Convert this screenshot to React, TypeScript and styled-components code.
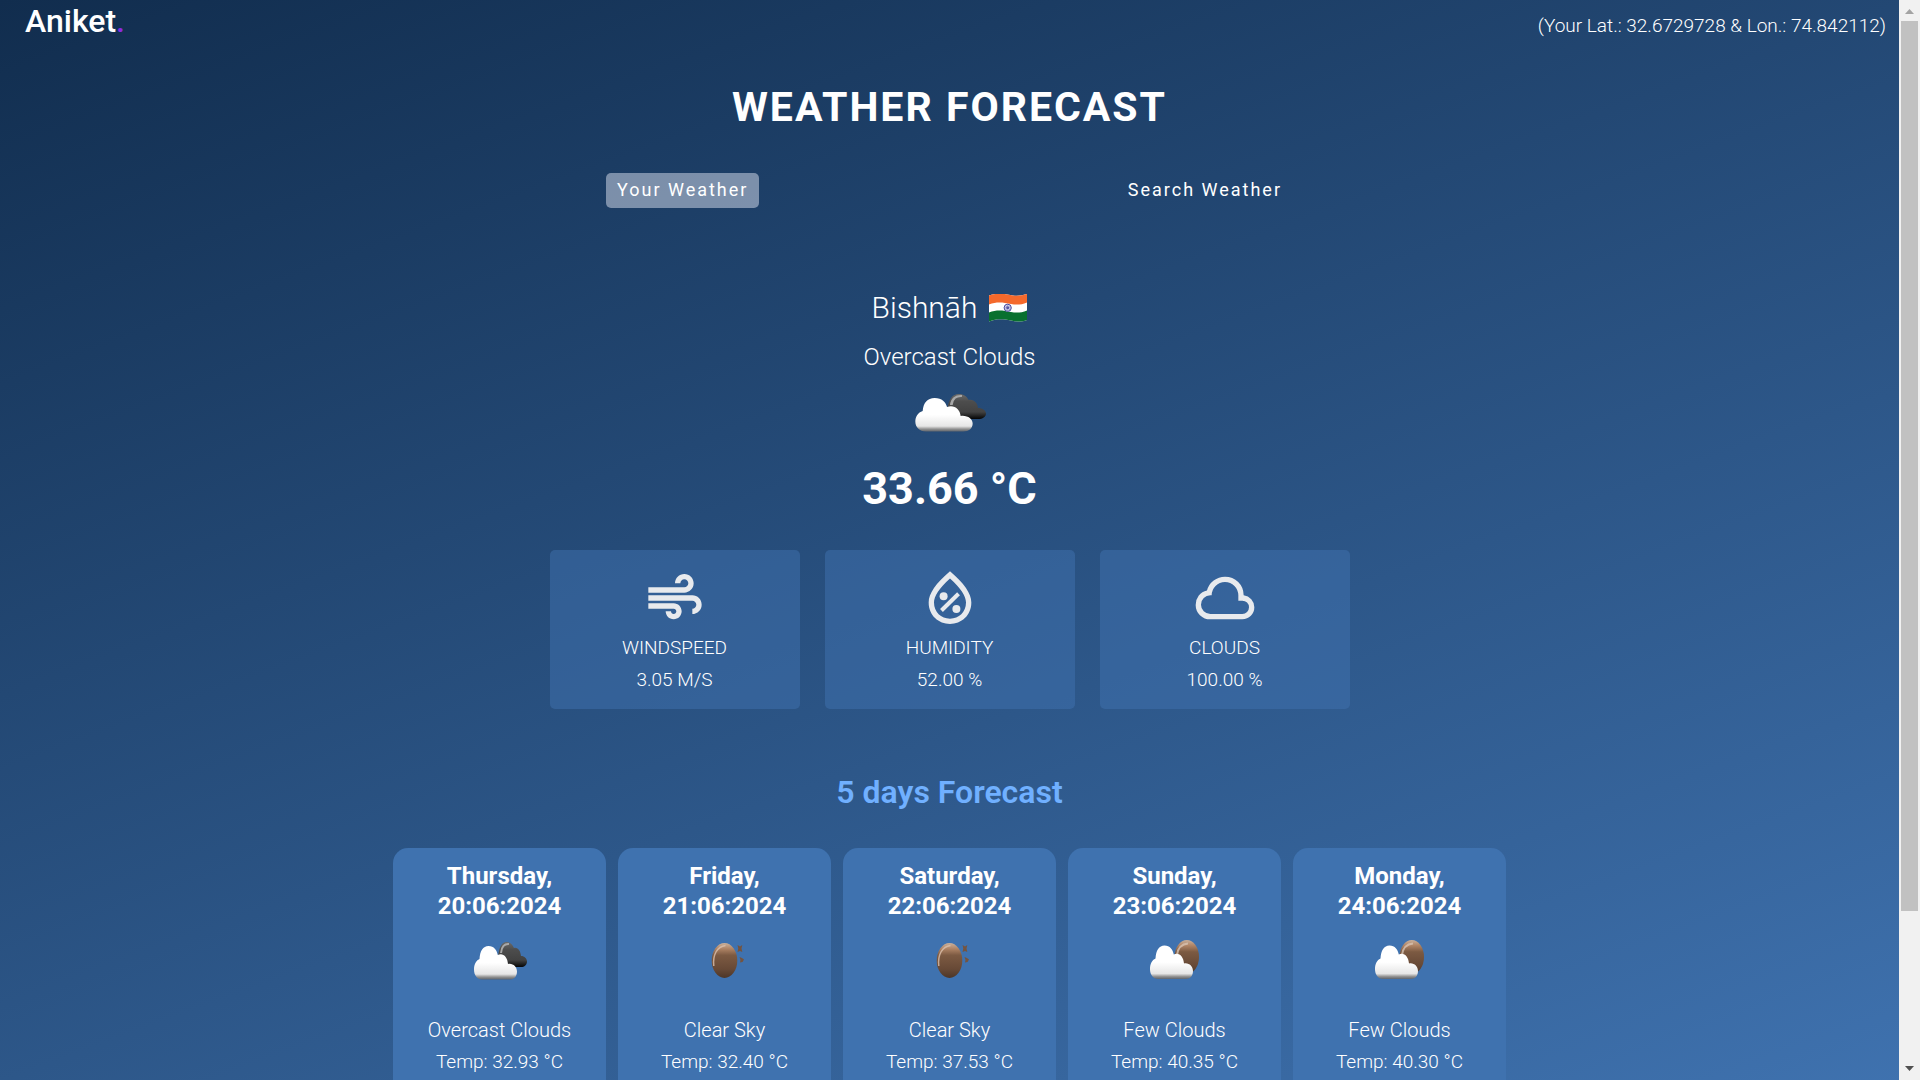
import React from 'react';
import styled, { createGlobalStyle } from 'styled-components';
import { MdAir } from 'react-icons/md';

const GlobalStyle = createGlobalStyle`
  *, *::before, *::after { box-sizing: border-box; }
  body {
    margin: 0;
    color: #ffffff;
    font-family: Roboto, "Liberation Sans", sans-serif;
    font-weight: 300;
  }
  h1, h2, h3, p { margin: 0; }
`;

const Shell = styled.div`
  display: flex;
  height: 100vh;
  background: linear-gradient(160deg, #112d4e, #3f72af);
`;

const Page = styled.div`
  flex: 1;
  min-width: 0;
  overflow-y: auto;
  scrollbar-width: none;
`;

const Header = styled.header`
  display: flex;
  justify-content: space-between;
  align-items: flex-start;
  height: 42px;
  padding: 0 13px 0 25px;
`;

const Brand = styled.a`
  color: inherit;
  text-decoration: none;
  font-size: 32px;
  font-weight: 500;
  line-height: 42px;
`;

const BrandDot = styled.span`
  color: #8a2be2;
`;

const Coordinates = styled.p`
  padding-top: 12px;
  font-size: 19px;
  line-height: 28px;
`;

const Main = styled.main`
  display: flex;
  flex-direction: column;
  align-items: center;
`;

const Title = styled.h1`
  margin-top: 41px;
  font-size: 41px;
  font-weight: 700;
  line-height: 48px;
  letter-spacing: 2px;
  text-transform: uppercase;
`;

const Tabs = styled.nav`
  display: flex;
  justify-content: space-around;
  width: 55%;
  margin-top: 42px;
`;

const Tab = styled.button<{ $active?: boolean }>`
  height: 35px;
  padding: 0 11px 2px;
  border: 0;
  border-radius: 5px;
  background: ${(p) => (p.$active ? 'rgba(219, 226, 239, 0.5)' : 'transparent')};
  color: inherit;
  font-family: inherit;
  font-size: 18px;
  font-weight: 400;
  letter-spacing: 2px;
  cursor: pointer;
`;

const Current = styled.section`
  display: flex;
  flex-direction: column;
  align-items: center;
  margin-top: 80px;
`;

const Place = styled.div`
  display: flex;
  align-items: center;
  gap: 12px;
  font-size: 30px;
  line-height: 40px;
`;

const Condition = styled.p`
  margin: 13px 0 19px;
  font-size: 24px;
  line-height: 32px;
`;

const Temperature = styled.p`
  margin-top: 29px;
  font-size: 45px;
  font-weight: 700;
  line-height: 56px;
`;

const Metrics = styled.div`
  display: flex;
  gap: 25px;
  margin-top: 33px;
`;

const Metric = styled.div`
  display: flex;
  flex-direction: column;
  align-items: center;
  width: 250px;
  padding: 16px 0 13px;
  border-radius: 5px;
  background: rgba(63, 114, 175, 0.5);
  font-size: 19px;
  line-height: 32px;
  text-transform: uppercase;

  svg {
    width: 64px;
    height: 64px;
    margin-bottom: 2px;
    color: #e8eaed;
  }
`;

const SectionTitle = styled.h2`
  margin-top: 63px;
  color: #70b0ff;
  font-size: 32px;
  font-weight: 600;
  line-height: 40px;
`;

const Forecast = styled.div`
  display: flex;
  gap: 12px;
  margin-top: 36px;
  padding-bottom: 32px;
`;

const DayCard = styled.article`
  display: flex;
  flex-direction: column;
  align-items: center;
  width: 213px;
  padding: 13px 16px 160px;
  border-radius: 15px;
  background: #3f72af;
  text-align: center;
`;

const DayName = styled.h3`
  margin-bottom: 19px;
  font-size: 24px;
  font-weight: 700;
  line-height: 30px;
`;

const DayText = styled.p`
  font-size: 19px;
  line-height: 31px;
`;

const DayCondition = styled(DayText)`
  margin-top: 35px;
  font-size: 20px;
`;

const Drawing = styled.svg<{ $wide?: boolean }>`
  display: block;
  width: ${(p) => (p.$wide ? 72 : 54)}px;
  height: 40px;
`;

const ScrollRail = styled.div`
  display: flex;
  flex-direction: column;
  width: 21px;
  padding: 0 2px;
  background: #f1f1f1;
`;

const ScrollThumb = styled.div`
  flex: 6;
  background: #c1c1c1;
`;

const ScrollRest = styled.div`
  flex: 1;
`;

const ScrollArrow = styled.svg`
  display: block;
  width: 17px;
  height: 21px;
`;

type Sky = 'overcast' | 'clear' | 'few';

const FrontCloud = ({ id }: { id: string }) => (
  <path
    d="M8 39.5C3 39.5 0 35 0 29.5C0 24.5 2 20.5 5.5 19C6 11 9 6 14.5 6C20 6 22.8 10 23.8 15C29 12.5 33.5 17 34 24C39 23 43 27 43 31.5C43 36.500 40 39.500 36 39.500Z"
    fill={`url(#${id}-front)`}
  />
);

const SkyIcon = ({ sky, wide, id }: { sky: Sky; wide?: boolean; id: string }) => (
  <Drawing $wide={wide} viewBox="0 0 54 40" preserveAspectRatio="none" aria-hidden="true">
    <defs>
      <linearGradient id={`${id}-front`} x1="0" y1="0" x2="0" y2="1">
        <stop offset="0" stopColor="#ffffff" />
        <stop offset="0.5" stopColor="#ffffff" />
        <stop offset="0.84" stopColor="#e6e6e6" />
        <stop offset="0.93" stopColor="#8f8f8f" />
        <stop offset="1" stopColor="#5f646c" />
      </linearGradient>
      <linearGradient id={`${id}-dark`} x1="0" y1="0" x2="0" y2="1">
        <stop offset="0" stopColor="#6a6a6a" />
        <stop offset="0.3" stopColor="#4d4d4d" />
        <stop offset="0.72" stopColor="#424242" />
        <stop offset="1" stopColor="#050505" />
      </linearGradient>
      <linearGradient id={`${id}-disc`} x1="0" y1="0" x2="0" y2="1">
        <stop offset="0" stopColor="#c9b09c" />
        <stop offset="0.16" stopColor="#b08566" />
        <stop offset="0.35" stopColor="#7c5a42" />
        <stop offset="0.75" stopColor="#674936" />
        <stop offset="1" stopColor="#4c3628" />
      </linearGradient>
    </defs>
    {sky === 'overcast' && (
      <>
        <path
          d="M25 17C26 7 29 2 33.5 2C37.5 2 39.5 4.5 41 8C45 7 47.5 11 48 16C51.5 16 54 18.5 54 21.5C54 25 51.5 27 48 27L33 27Z"
          fill={`url(#${id}-dark)`}
        />
        <path d="M28 13C28.5 6.500 31.500 3.500 36 4" fill="none" stroke="#a8a8a8" strokeWidth="2" />
        <g transform="translate(1 0)">
          <FrontCloud id={id} />
        </g>
      </>
    )}
    {sky === 'clear' && (
      <>
        <ellipse cx="26.500" cy="20.500" rx="12.800" ry="17.500" fill={`url(#${id}-disc)`} />
        <path d="M15.800 26C14.500 15 19 6.500 27.500 5.500" fill="none" stroke="#dcc0ac" strokeWidth="1.500" opacity="0.8" />
        <path d="M39.500 5L42 6.500L44.300 5L43.500 8.500L44.300 12L42 11L39.500 12L40.300 8.500Z" fill="#75543f" />
        <path d="M41.500 17L44 18L46 19.500L44.500 22L42 22.500L42.500 20Z" fill="#75543f" />
      </>
    )}
    {sky === 'few' && (
      <>
        <ellipse cx="38.800" cy="17" rx="12.200" ry="17" fill={`url(#${id}-disc)`} />
        <path d="M29 15C30 7 34 4 40 3.500" fill="none" stroke="#d8c3b3" strokeWidth="2" opacity="0.8" />
        <g transform="translate(2 -0.500)">
          <FrontCloud id={id} />
        </g>
      </>
    )}
  </Drawing>
);

const FlagDrawing = styled.svg`
  display: block;
  width: 38px;
  height: 29px;
`;

const IndiaFlag = () => (
  <FlagDrawing viewBox="0 0 38 29" role="img" aria-label="India">
    <defs>
      <clipPath id="flag-cloth">
        <path d="M0 1.500C10-2 18 .500 24 1.500C30 2.300 34 1 38 0V26C33 28 28 28 22 26.500C14 25 8 24.500 0 27.500Z" />
      </clipPath>
    </defs>
    <g clipPath="url(#flag-cloth)">
      <rect width="38" height="29" fill="#ffffff" />
      <path d="M0-1H38V8.500C32 11 27 11 22 10C14 8.500 8 7.500 0 10.500Z" fill="#f4692c" />
      <path d="M0 18.500C8 15.500 14 16.500 22 18C27 19 32 19 38 16.500V30H0Z" fill="#08702f" />
    </g>
    <circle cx="18.700" cy="13.800" r="3.600" fill="#dcdcf0" stroke="#49479d" strokeWidth="1" />
    <circle cx="18.700" cy="13.800" r="1.300" fill="#2f2d8c" />
    <path d="M18.700 10.300V17.300M15.200 13.800H22.200M16.200 11.300L21.200 16.300M21.200 11.300L16.200 16.300" stroke="#6563ad" strokeWidth="0.500" />
  </FlagDrawing>
);

const HumidityIcon = () => (
  <svg viewBox="0 0 24 24" fill="currentColor" aria-hidden="true">
    <path d="M12 2c-5.330 4.550-8 8.380-8 11.700 0 4.880 3.800 8.050 8 8.050s8-3.170 8-8.050c0-3.320-2.670-7.150-8-11.700zm0 17.750c-3.350 0-6-2.470-6-6.050 0-2.340 1.950-5.400 6-9.040 4.050 3.640 6 6.700 6 9.040 0 3.580-2.650 6.050-6 6.050z" />
    <circle cx="9.600" cy="11.300" r="1.500" />
    <circle cx="14.400" cy="16.100" r="1.500" />
    <path d="M8.800 16.700L15.200 10.400" stroke="currentColor" strokeWidth="1.500" />
  </svg>
);

const CloudIcon = () => (
  <svg viewBox="0 0 24 24" fill="currentColor" aria-hidden="true">
    <path d="M6.500 20Q4.220 20 2.610 18.430 1 16.850 1 14.580 1 12.630 2.170 11.100 3.350 9.570 5.250 9.150 5.880 6.850 7.750 5.430 9.630 4 12 4 14.930 4 16.960 6.040 19 8.070 19 11 20.730 11.200 21.860 12.500 23 13.780 23 15.500 23 17.380 21.690 18.690 20.380 20 18.500 20M6.500 18H18.500Q19.550 18 20.270 17.270 21 16.550 21 15.500 21 14.450 20.270 13.730 19.550 13 18.500 13H17V11Q17 8.930 15.540 7.460 14.080 6 12 6 9.930 6 8.460 7.460 7 8.930 7 11H6.500Q5.050 11 4.030 12.030 3 13.050 3 14.500 3 15.950 4.030 17 5.050 18 6.500 18" fillRule="evenodd" />
  </svg>
);

const metrics = [
  { label: 'Windspeed', value: '3.05 m/s', icon: <MdAir /> },
  { label: 'Humidity', value: '52.00 %', icon: <HumidityIcon /> },
  { label: 'Clouds', value: '100.00 %', icon: <CloudIcon /> },
];

const days: { day: string; date: string; sky: Sky; text: string; temp: string }[] = [
  { day: 'Thursday', date: '20:06:2024', sky: 'overcast', text: 'Overcast Clouds', temp: '32.93' },
  { day: 'Friday', date: '21:06:2024', sky: 'clear', text: 'Clear Sky', temp: '32.40' },
  { day: 'Saturday', date: '22:06:2024', sky: 'clear', text: 'Clear Sky', temp: '37.53' },
  { day: 'Sunday', date: '23:06:2024', sky: 'few', text: 'Few Clouds', temp: '40.35' },
  { day: 'Monday', date: '24:06:2024', sky: 'few', text: 'Few Clouds', temp: '40.30' },
];

export default function App() {
  return (
    <>
      <GlobalStyle />
      <Shell>
        <Page>
          <Header>
            <Brand href="#">
              Aniket<BrandDot>.</BrandDot>
            </Brand>
            <Coordinates>(Your Lat.: 32.6729728 &amp; Lon.: 74.842112)</Coordinates>
          </Header>
          <Main>
            <Title>Weather Forecast</Title>
            <Tabs>
              <Tab type="button" $active>Your Weather</Tab>
              <Tab type="button">Search Weather</Tab>
            </Tabs>
            <Current>
              <Place>
                <span>Bishnāh</span>
                <IndiaFlag />
              </Place>
              <Condition>Overcast Clouds</Condition>
              <SkyIcon sky="overcast" wide id="now" />
              <Temperature>33.66 °C</Temperature>
              <Metrics>
                {metrics.map((m) => (
                  <Metric key={m.label}>
                    {m.icon}
                    <span>{m.label}</span>
                    <span>{m.value}</span>
                  </Metric>
                ))}
              </Metrics>
            </Current>
            <SectionTitle>5 days Forecast</SectionTitle>
            <Forecast>
              {days.map((d) => (
                <DayCard key={d.day}>
                  <DayName>
                    {d.day},<br />
                    {d.date}
                  </DayName>
                  <SkyIcon sky={d.sky} id={d.day} />
                  <DayCondition>{d.text}</DayCondition>
                  <DayText>Temp: {d.temp} °C</DayText>
                </DayCard>
              ))}
            </Forecast>
          </Main>
        </Page>
        <ScrollRail aria-hidden="true">
          <ScrollArrow viewBox="0 0 17 21">
            <path d="M4 14L8.500 9L13 14Z" fill="#a3a3a3" />
          </ScrollArrow>
          <ScrollThumb />
          <ScrollRest />
          <ScrollArrow viewBox="0 0 17 21">
            <path d="M4 7L8.500 12L13 7Z" fill="#505050" />
          </ScrollArrow>
        </ScrollRail>
      </Shell>
    </>
  );
}
